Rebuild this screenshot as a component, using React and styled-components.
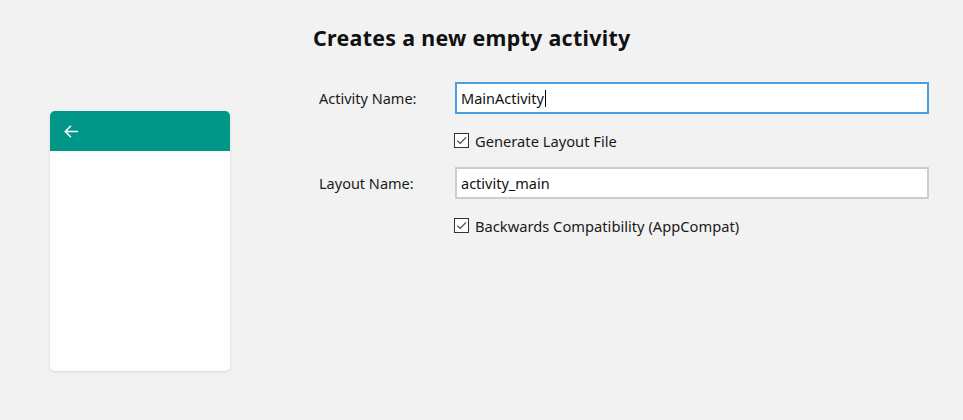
import React from "react";
import styled, { createGlobalStyle } from "styled-components";

const Global = createGlobalStyle`
  html, body { margin: 0; padding: 0; background: #f2f2f2; }
  body { font-family: "Noto Sans", "Open Sans", sans-serif; color: #1a1a1a; }
`;

const Page = styled.div`
  display: flex;
  width: 963px;
  height: 420px;
  background: #f2f2f2;
`;

const PreviewCol = styled.div`
  width: 313px;
  padding: 111px 0 0 50px;
  box-sizing: border-box;
  flex-shrink: 0;
`;

const Phone = styled.div`
  width: 180px;
  height: 260px;
  background: #fff;
  border-radius: 5px;
  overflow: hidden;
  box-shadow: 0 1px 3px rgba(0, 0, 0, 0.12);
`;

const AppBar = styled.div`
  height: 40px;
  background: #009688;
  display: flex;
  align-items: center;
  padding-left: 13px;
`;

const FormCol = styled.div`
  padding-top: 22px;
  flex: 1;
`;

const Title = styled.h1`
  margin: 0 0 28px 0;
  font-size: 21.4px;
  font-weight: 700;
  letter-spacing: 0.3px;
  color: #111;
  line-height: 32px;
`;

const Grid = styled.div`
  display: grid;
  grid-template-columns: 136px 474px;
  padding-left: 6px;
`;

const Label = styled.label`
  font-size: 14.5px;
  display: flex;
  align-items: center;
  height: 32px;
`;

const Field = styled.div`
  position: relative;
  width: 474px;
  height: 32px;
`;

const Input = styled.input`
  box-sizing: border-box;
  width: 474px;
  height: 32px;
  border: 2px solid ${(p) => (p.$focused ? "#4a9fe0" : "#cdcdcd")};
  background: #fff;
  padding: 0 4px;
  font-family: inherit;
  font-size: 14.5px;
  color: #111;
  outline: none;
  caret-color: transparent;
`;

const Caret = styled.span`
  position: absolute;
  left: 90px;
  top: 8px;
  width: 1px;
  height: 17px;
  background: #000;
  pointer-events: none;
`;

const CheckRow = styled.label`
  grid-column: 2;
  display: flex;
  align-items: center;
  gap: 6px;
  height: 53px;
  font-size: 14.7px;
  margin-left: -1px;
`;

const Box = styled.span`
  width: 15px;
  height: 15px;
  box-sizing: border-box;
  border: 1px solid #333;
  background: #fff;
  display: flex;
  align-items: center;
  justify-content: center;
`;

const Check = () => (
  <Box>
    <svg width="13" height="13" viewBox="0 0 13 13">
      <path d="M2.3 6.6 L5.2 9.5 L11 3.4" fill="none" stroke="#444" strokeWidth="1.2" />
    </svg>
  </Box>
);

export default function App() {
  return (
    <Page>
      <Global />
      <PreviewCol>
        <Phone>
          <AppBar>
            <svg width="16" height="16" viewBox="0 0 16 16">
              <path d="M15 8.5 H2.5 M8 2.8 L2.3 8.5 L8 14.2" fill="none" stroke="#fff" strokeWidth="1.6" />
            </svg>
          </AppBar>
        </Phone>
      </PreviewCol>
      <FormCol>
        <Title>Creates a new empty activity</Title>
        <Grid>
          <Label>Activity Name:</Label>
          <Field>
            <Input $focused defaultValue="MainActivity" />
            <Caret />
          </Field>
          <CheckRow>
            <Check />
            Generate Layout File
          </CheckRow>
          <Label>Layout Name:</Label>
          <Field>
            <Input defaultValue="activity_main" />
          </Field>
          <CheckRow>
            <Check />
            Backwards Compatibility (AppCompat)
          </CheckRow>
        </Grid>
      </FormCol>
    </Page>
  );
}
